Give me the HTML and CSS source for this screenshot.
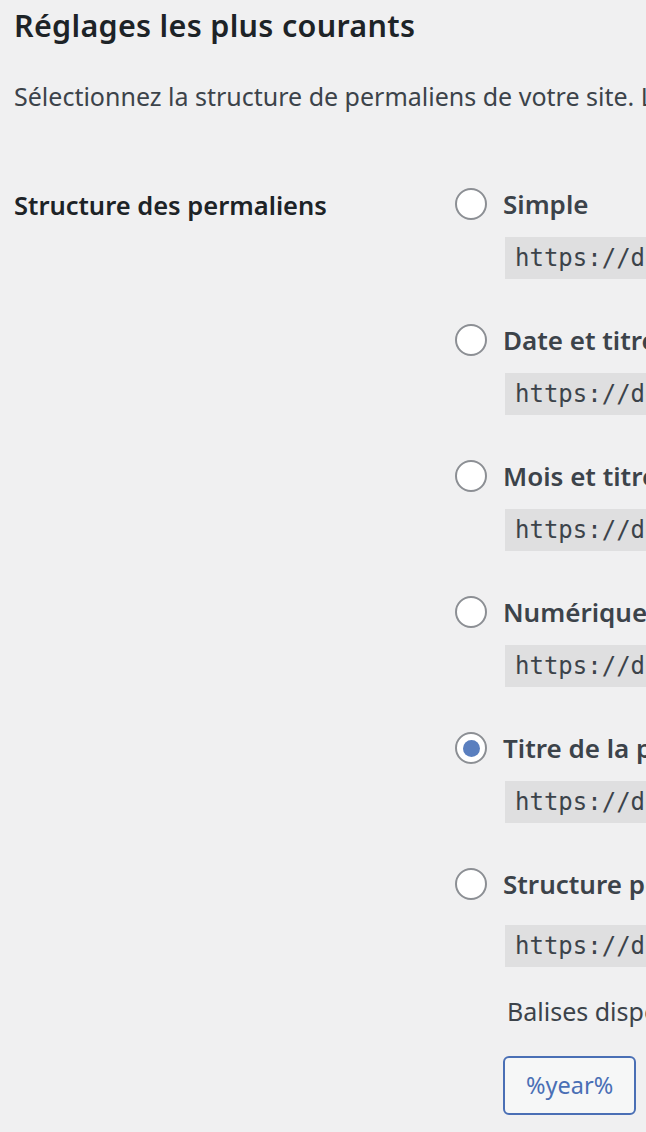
FILE: index.html
```html
<!DOCTYPE html>
<html lang="fr">
<head>
    <meta charset="UTF-8">
    <meta name="viewport" content="width=device-width, initial-scale=1.0">
    <title>Réglages des permaliens</title>
    <link rel="stylesheet" href="styles.css">
</head>
<body>
    <div class="wrap">
        <h2>Réglages les plus courants</h2>
        <p class="intro">Sélectionnez la structure de permaliens de votre site. L’inclusion de la balise %postname% rend les liens plus faciles à comprendre, et peut aider vos publications à être mieux classées dans les moteurs de recherche.</p>

        <div class="form-row">
            <div class="row-label">Structure des permaliens</div>
            <div class="choices">
                <div class="choice">
                    <label><input type="radio" name="selection"> Simple</label>
                    <code>https://demo.example.fr/?p=123</code>
                </div>
                <div class="choice">
                    <label><input type="radio" name="selection"> Date et titre</label>
                    <code>https://demo.example.fr/2024/05/14/exemple-article/</code>
                </div>
                <div class="choice">
                    <label><input type="radio" name="selection"> Mois et titre</label>
                    <code>https://demo.example.fr/2024/05/exemple-article/</code>
                </div>
                <div class="choice">
                    <label><input type="radio" name="selection"> Numérique</label>
                    <code>https://demo.example.fr/archives/123</code>
                </div>
                <div class="choice">
                    <label><input type="radio" name="selection" checked> Titre de la publication</label>
                    <code>https://demo.example.fr/exemple-article/</code>
                </div>
                <div class="choice custom">
                    <label><input type="radio" name="selection"> Structure personnalisée</label>
                    <code>https://demo.example.fr/%postname%/</code>
                    <p class="tags-note">Balises disponibles :</p>
                    <div class="tags">
                        <button type="button">%year%</button>
                        <button type="button">%monthnum%</button>
                        <button type="button">%day%</button>
                    </div>
                </div>
            </div>
        </div>
    </div>
</body>
</html>
```

FILE: styles.css
```css
html, body { overflow: hidden; }
body { margin: 0; background: #f0f0f1; color: #3c434a; font-family: "Noto Sans", "Open Sans", sans-serif; }
.wrap { width: 1800px; padding: 6px 14px 0; }
h2 { margin: 0; font-size: 30.5px; font-weight: 600; letter-spacing: 0.3px; color: #1d2327; line-height: 1.3; }
.intro { margin: 32px 0 0; font-size: 25px; line-height: 1.5; white-space: nowrap; }
.form-row { display: flex; margin-top: 73px; }
.row-label { width: 441px; flex: none; font-size: 25.5px; font-weight: 600; color: #1d2327; line-height: 32px; padding-top: 1px; }
.choices { display: flex; flex-direction: column; gap: 45px; }
.choice { display: flex; flex-direction: column; align-items: flex-start; gap: 17px; }
.choice label { display: flex; align-items: center; gap: 16px; font-size: 26px; font-weight: 600; color: #3c434a; line-height: 32px; white-space: nowrap; }
.choice input { appearance: none; margin: 0; width: 32px; height: 32px; border: 2px solid #8c8f94; border-radius: 50%; background: #fff; display: grid; place-items: center; box-sizing: border-box; }
.choice input:checked::before { content: ""; width: 17px; height: 17px; border-radius: 50%; background: #5a7fbf; }
.choice code { margin-left: 50px; padding: 6px 10px; background: #dfdfe0; font-family: "DejaVu Sans Mono", "Liberation Mono", monospace; font-size: 24px; line-height: 30px; color: #3c434a; white-space: nowrap; }
.custom code { margin-top: 8px; }
.tags-note { margin: 9px 0 0 52px; font-size: 25px; line-height: 1.5; white-space: nowrap; }
.tags { display: flex; gap: 10px; margin: 8px 0 0 48px; }
.tags button { font-family: inherit; font-size: 23.5px; color: #4a6fb5; background: #f6f7f7; border: 2px solid #4a6fb5; border-radius: 6px; padding: 0 21px; height: 59px; }
```
